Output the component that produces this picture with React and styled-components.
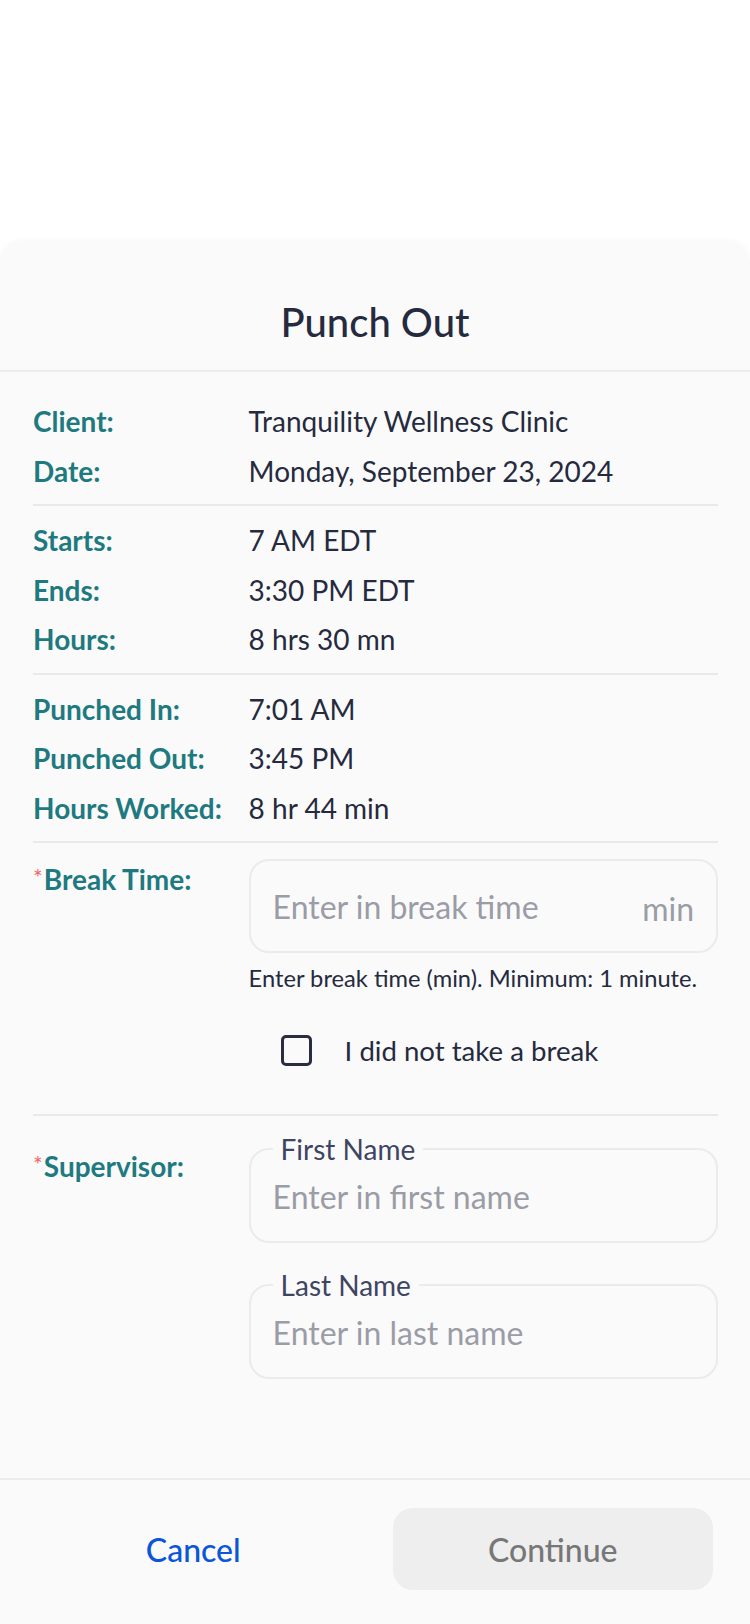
import React from 'react';
import styled, { createGlobalStyle } from 'styled-components';

const GlobalStyle = createGlobalStyle`
    html, body {
        margin: 0;
        padding: 0;
        background: #ffffff;
        font-family: Lato, "Open Sans", Arial, sans-serif;
    }
    * { box-sizing: border-box; }
`

const Page = styled.div`
    min-height: 100vh;
    display: flex;
    flex-direction: column;
    background: #ffffff;
`
const Backdrop = styled.div`
    height: 241px;
    flex-shrink: 0;
`
const Sheet = styled.div`
    flex: 1;
    display: flex;
    flex-direction: column;
    background: #fafafa;
    border-radius: 24px 24px 0 0;
    box-shadow: 0 -1px 6px rgba(0, 0, 0, 0.035);
`
const Header = styled.div`
    height: 131px;
    padding-top: 33px;
    display: flex;
    align-items: center;
    justify-content: center;
    border-bottom: 2px solid #ececec;
`
const Title = styled.h1`
    margin: 0;
    font-size: 40px;
    font-weight: 500;
    color: #262a3e;
`
const Body = styled.div`
    flex: 1;
    padding: 15px 32px 0 33px;
`
const Section = styled.div`
    display: grid;
    grid-template-columns: 215.6px minmax(0, 1fr);
    align-items: start;
    padding: ${p => p.$top || 10}px 0 ${p => p.$bottom || 8}px;
    border-bottom: ${p => p.$last ? 'none' : '2px solid #e9e9e9'};
`
const Label = styled.div`
    font-size: 28px;
    font-weight: 700;
    line-height: 49.5px;
    color: #1e7a80;
    white-space: nowrap;
    padding-top: ${p => p.$offset || 0}px;
`
const Required = styled.span`
    color: #f06a6a;
    font-size: 23px;
    font-weight: 400;
    vertical-align: 4px;
    margin-right: 1px;
`
const Value = styled.div`
    font-size: 28px;
    line-height: 49.5px;
    color: #262a3e;
`
const FieldColumn = styled.div`
    display: flex;
    flex-direction: column;
`
const InputBox = styled.label`
    margin-top: 6px;
    height: 94px;
    display: flex;
    align-items: center;
    padding: 0 22px;
    border: 2px solid #ebebeb;
    border-radius: 20px;
    background: #fafafa;
`
const TextInput = styled.input`
    flex: 1;
    min-width: 0;
    border: none;
    outline: none;
    background: transparent;
    font-family: inherit;
    font-size: 32px;
    color: #262a3e;
    padding: 0;
    &::placeholder { color: #9a9ca6; }
`
const NameInput = styled(TextInput)`
    width: 100%;
    height: 56px;
    margin: 6px 0 17px;
`
const Unit = styled.span`
    font-size: 32px;
    color: #9a9ca6;
    padding-top: 4px;
`
const Helper = styled.div`
    margin-top: 11px;
    font-size: 23.7px;
    line-height: 28px;
    color: #262a3e;
    white-space: nowrap;
`
const CheckRow = styled.label`
    margin-top: 33px;
    height: 50px;
    display: flex;
    align-items: center;
    padding-left: 32px;
    gap: 33px;
    font-size: 27.6px;
    color: #262a3e;
`
const Box = styled.span`
    width: 31px;
    height: 31px;
    border: 3.5px solid #2a2d42;
    border-radius: 5px;
    flex-shrink: 0;
`
const Fieldset = styled.fieldset`
    margin: ${p => p.$gap || 0}px 0 0;
    padding: 0 22px;
    border: 2px solid #ebebeb;
    border-radius: 20px;
    min-width: 0;
`
const Legend = styled.legend`
    margin-left: 0;
    padding: 0 8px;
    font-size: 28px;
    line-height: 26px;
    color: #3e4562;
`
const Footer = styled.div`
    display: grid;
    grid-template-columns: 1fr 1fr;
    gap: 39px;
    padding: 28px 37px 34px 33px;
    border-top: 2px solid #ececec;
`
const Button = styled.button`
    height: 82px;
    border: none;
    border-radius: 20px;
    font-family: inherit;
    font-size: 32px;
    font-weight: 500;
    background: ${p => p.$filled ? '#eeeeee' : 'transparent'};
    color: ${p => p.$filled ? '#777777' : '#0a55d8'};
`

const details = [
    [
        ['Client:', 'Tranquility Wellness Clinic'],
        ['Date:', 'Monday, September 23, 2024'],
    ],
    [
        ['Starts:', '7 AM EDT'],
        ['Ends:', '3:30 PM EDT'],
        ['Hours:', '8 hrs 30 mn'],
    ],
    [
        ['Punched In:', '7:01 AM'],
        ['Punched Out:', '3:45 PM'],
        ['Hours Worked:', '8 hr 44 min'],
    ],
]

export default function App() {
    return (
        <Page>
            <GlobalStyle />
            <Backdrop />
            <Sheet>
                <Header>
                    <Title>Punch Out</Title>
                </Header>
                <Body>
                    {details.map((group, i) => (
                        <Section key={i}>
                            {group.map(([label, value]) => (
                                <React.Fragment key={label}>
                                    <Label>{label}</Label>
                                    <Value>{value}</Value>
                                </React.Fragment>
                            ))}
                        </Section>
                    ))}
                    <Section $bottom={39}>
                        <Label><Required>*</Required>Break Time:</Label>
                        <FieldColumn>
                            <InputBox>
                                <TextInput placeholder="Enter in break time" />
                                <Unit>min</Unit>
                            </InputBox>
                            <Helper>Enter break time (min). Minimum: 1 minute.</Helper>
                            <CheckRow>
                                <Box />
                                I did not take a break
                            </CheckRow>
                        </FieldColumn>
                    </Section>
                    <Section $top={20} $bottom={0} $last>
                        <Label $offset={4}><Required>*</Required>Supervisor:</Label>
                        <FieldColumn>
                            <Fieldset>
                                <Legend>First Name</Legend>
                                <NameInput placeholder="Enter in first name" />
                            </Fieldset>
                            <Fieldset $gap={29}>
                                <Legend>Last Name</Legend>
                                <NameInput placeholder="Enter in last name" />
                            </Fieldset>
                        </FieldColumn>
                    </Section>
                </Body>
                <Footer>
                    <Button>Cancel</Button>
                    <Button $filled>Continue</Button>
                </Footer>
            </Sheet>
        </Page>
    )
}
